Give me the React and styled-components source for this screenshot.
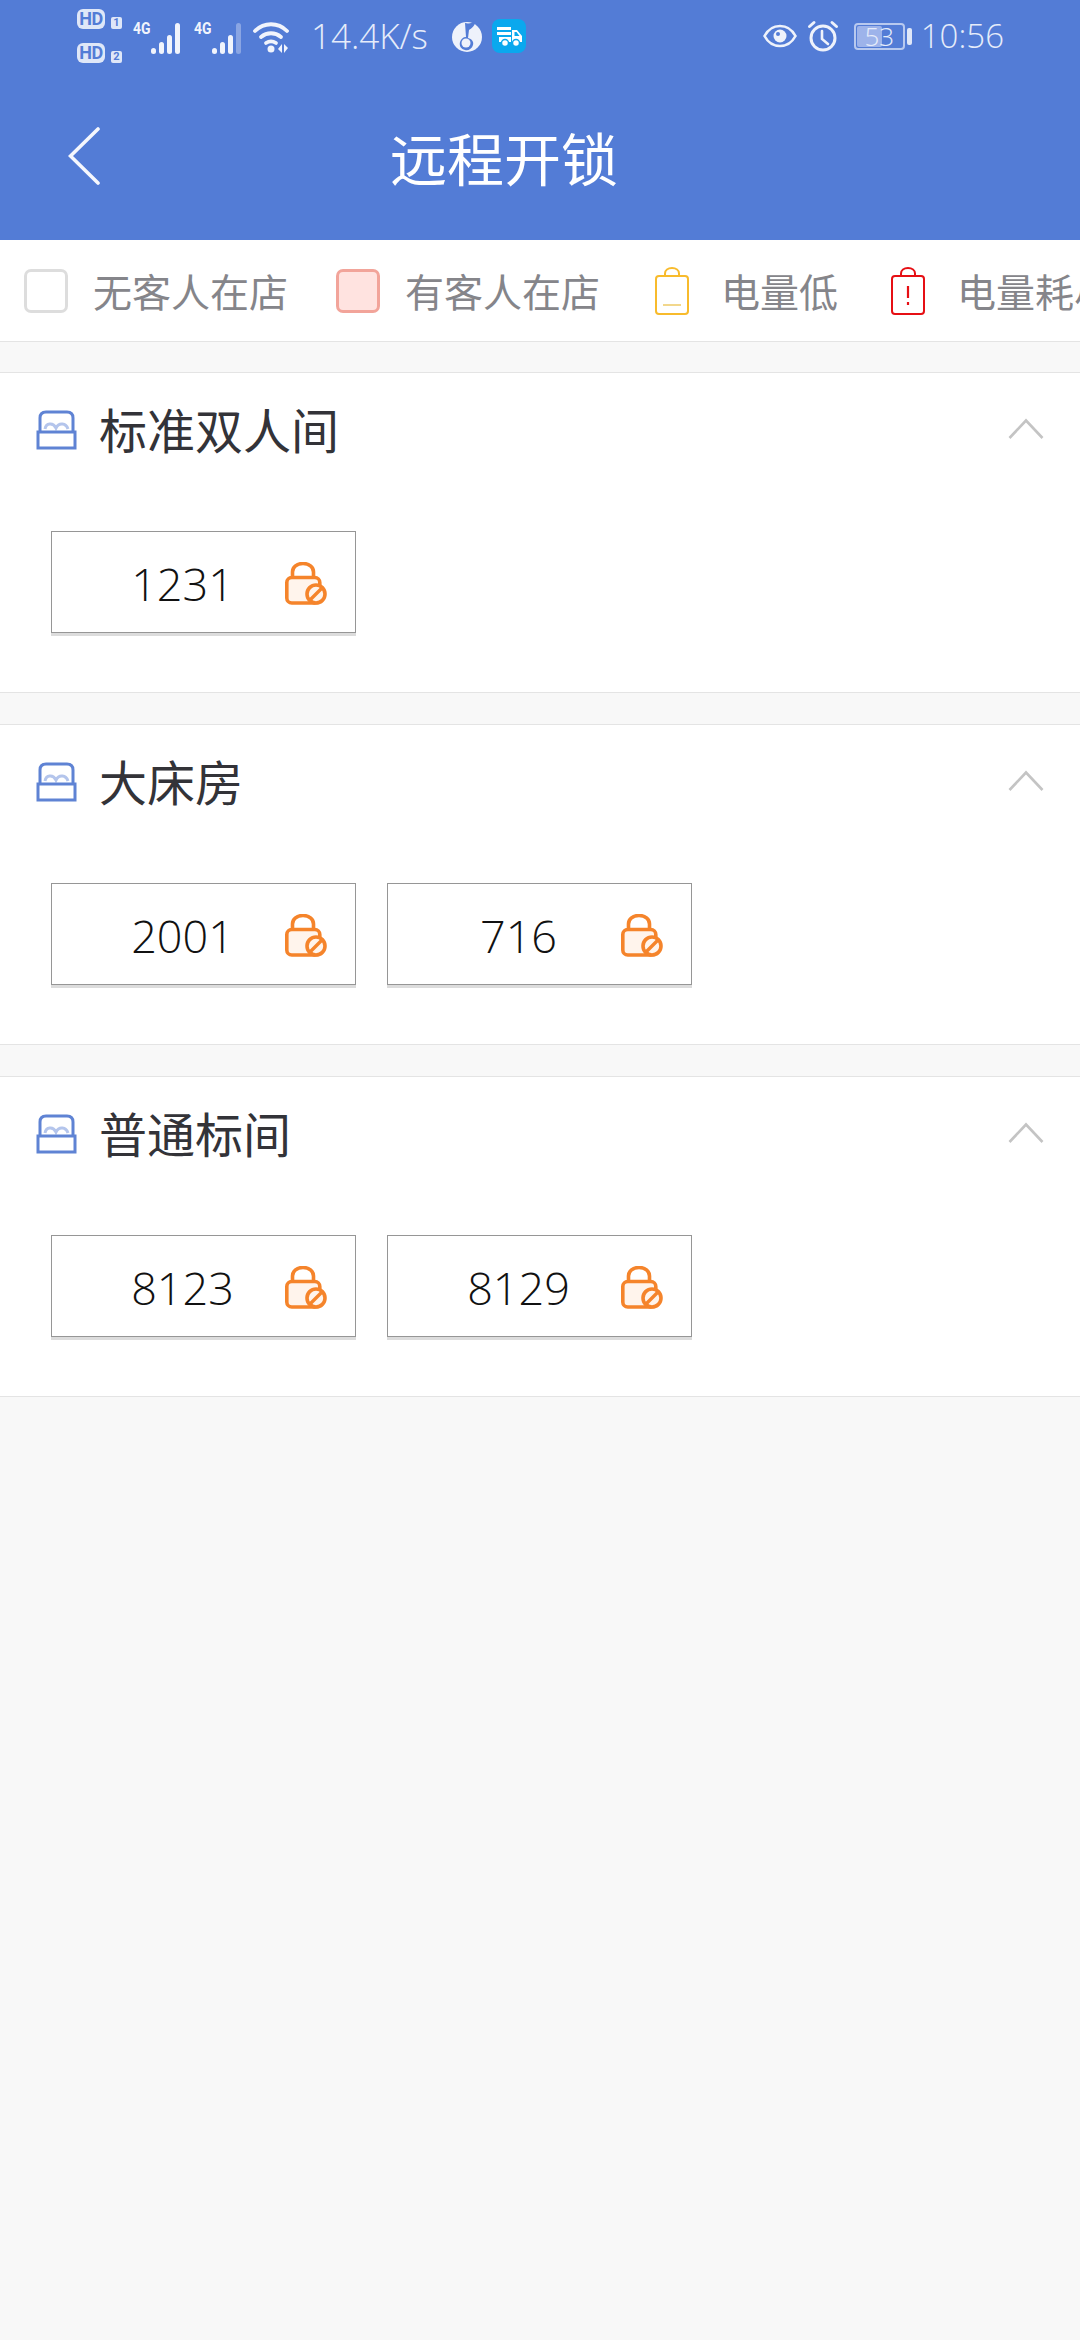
import styled, { createGlobalStyle } from "styled-components";

const GlobalStyle = createGlobalStyle`
  html, body {
    margin: 0;
    padding: 0;
    background: #f8f8f8;
  }
  body {
    font-family: "Open Sans", "Noto Sans CJK SC", sans-serif;
  }
`;

const Page = styled.div`
  width: 1080px;
  height: 2340px;
  overflow: hidden;
  background: #f8f8f8;
`;

const Header = styled.header`
  height: 240px;
  background: #537cd6;
  color: #fff;
`;

const StatusBar = styled.div`
  height: 72px;
  padding: 0 76px 0 77px;
  display: flex;
  align-items: center;
  justify-content: space-between;
`;

const StatusGroup = styled.div`
  display: flex;
  align-items: center;
`;

const HdStack = styled.div`
  display: flex;
  flex-direction: column;
  gap: 14px;
  margin-right: 11px;
`;

const HdRow = styled.div`
  display: flex;
  align-items: flex-end;
  gap: 6px;
`;

const HdChip = styled.span`
  width: 28px;
  height: 20px;
  border-radius: 6px;
  background: #dfe7f8;
  color: #537cd6;
  font: 700 18px/20px "Roboto", sans-serif;
  text-align: center;
  letter-spacing: -0.5px;
`;

const SimChip = styled.span`
  width: 11px;
  height: 12px;
  border-radius: 2px;
  background: #dfe7f8;
  color: #537cd6;
  font: 700 11px/12px "Roboto", sans-serif;
  text-align: center;
`;

const NetLabel = styled.span`
  width: 17px;
  margin: 0 0 ${(p) => p.$lift}px ${(p) => p.$left}px;
  font: 700 17px/16px "Roboto", sans-serif;
  color: #f1f4fc;
  transform: scaleX(0.82);
  transform-origin: left center;
`;

const Speed = styled.span`
  margin: 0 24px 0 22px;
  font-size: 35px;
  font-weight: 300;
  line-height: 40px;
  color: #e6ecfa;
  white-space: nowrap;
`;

const Clock = styled.span`
  margin-left: 9px;
  font-size: 33px;
  font-weight: 300;
  line-height: 40px;
  color: #e6ecfa;
`;

const BatteryBox = styled.div`
  position: relative;
  width: 51px;
  height: 27px;
  margin-left: 15px;
  box-sizing: border-box;
  border: 2px solid #b8c9ef;
  border-radius: 4px;
  display: flex;
  align-items: center;
  justify-content: center;
  font-size: 26px;
  font-weight: 300;
  color: #e6ecfa;
`;

const BatteryFill = styled.div`
  position: absolute;
  left: 1px;
  top: 1px;
  bottom: 1px;
  border-radius: 2px;
  background: #9db3ea;
`;

const BatteryValue = styled.span`
  position: relative;
  line-height: 23px;
`;

const BatteryNub = styled.div`
  width: 5px;
  height: 17px;
  margin-left: 2px;
  border-radius: 2px;
  background: #dfe7f8;
`;

const NavBar = styled.div`
  height: 168px;
  padding-left: 68px;
  display: flex;
  align-items: center;
`;

const BackButton = styled.button`
  width: 32px;
  height: 58px;
  padding: 0;
  border: 0;
  background: none;
  display: block;
`;

const Title = styled.h1`
  margin: 0 0 0 290px;
  font: 400 57px/70px "Noto Sans CJK SC", sans-serif;
  color: #fff;
  white-space: nowrap;
`;

const Legend = styled.div`
  height: 102px;
  box-sizing: border-box;
  padding-left: 24px;
  background: #fff;
  border-bottom: 1px solid #e4e4e4;
  display: flex;
  align-items: center;
  overflow: hidden;
`;

const LegendItem = styled.div`
  display: flex;
  align-items: center;
  flex: none;
  margin-right: ${(p) => p.$gap}px;
`;

const Swatch = styled.span`
  width: 44px;
  height: 44px;
  box-sizing: border-box;
  border-radius: 7px;
  border: 3px solid ${(p) => p.$line};
  background: ${(p) => p.$fill};
`;

const LegendText = styled.span`
  margin-left: ${(p) => p.$gap}px;
  margin-top: -2px;
  font: 400 39px/50px "Noto Sans CJK SC", sans-serif;
  color: #85858a;
  white-space: nowrap;
`;

const Section = styled.section`
  height: 321px;
  box-sizing: border-box;
  margin-top: ${(p) => p.$top}px;
  background: #fff;
  border-top: 1px solid #e4e4e4;
  border-bottom: 1px solid #e4e4e4;
`;

const SectionHead = styled.div`
  height: 158px;
  padding: 37px 36px 0 36px;
  box-sizing: border-box;
  display: flex;
  align-items: flex-start;
`;

const SectionTitle = styled.h2`
  flex: 1;
  margin: -17px 0 0 22px;
  font: 400 48px/70px "Noto Sans CJK SC", sans-serif;
  color: #333338;
`;

const Chevron = styled.svg`
  margin-top: 8px;
`;

const Rooms = styled.div`
  padding-left: 51px;
  display: flex;
  gap: 31px;
`;

const RoomCard = styled.div`
  width: 305px;
  height: 102px;
  box-sizing: border-box;
  padding: 0 28px 0 28px;
  background: #fff;
  border: 1px solid #969696;
  box-shadow: 0 3px 0 #dcdcdc;
  display: flex;
  align-items: center;
`;

const RoomNumber = styled.span`
  flex: 1;
  padding-top: 2px;
  text-align: center;
  font-size: 45px;
  font-weight: 300;
  color: #111;
`;

const Bars = ({ dim }) => (
  <svg width="32" height="32" viewBox="0 0 32 32" style={{ marginTop: 4 }}>
    <g fill="#f1f4fc">
      <rect x="1" y="26" width="5" height="6" rx="2.5" />
      <rect x="9" y="20" width="5" height="12" rx="2.5" />
      <rect x="17" y="13" width="5" height="19" rx="2.5" />
      <rect x="25" y="1" width="5" height="31" rx="2.5" opacity={dim ? 0.35 : 1} />
    </g>
  </svg>
);

const Wifi = () => (
  <svg width="36" height="32" viewBox="0 0 36 32" style={{ marginLeft: 10, marginTop: 2 }}>
    <g fill="none" stroke="#f1f4fc" strokeWidth="3.8" strokeLinecap="round">
      <path d="M2 10C11 1 25 1 34 10" />
      <path d="M8 16c6-5 14-5 20 0" />
      <path d="M13 22c3-2 7-2 10 0" />
    </g>
    <circle cx="18" cy="28" r="3.5" fill="#f1f4fc" />
    <path d="M29 23v9l-4-4zM31 23v9l4-5z" fill="#f1f4fc" />
  </svg>
);

const MusicBadge = () => (
  <svg width="30" height="32" viewBox="0 0 30 32">
    <circle cx="15" cy="17" r="15" fill="#eef2fb" />
    <path d="M13 3c4 1 8 0 11-3-1 6-4 8-7 10l-1 8c4 1 6 4 5 7-1 4-5 6-8 5-4-1-6-4-5-8 1-3 3-5 6-5z" fill="#537cd6" />
    <circle cx="14" cy="23" r="4.500" fill="#eef2fb" />
  </svg>
);

const TruckBadge = () => (
  <svg width="34" height="34" viewBox="0 0 34 34" style={{ marginLeft: 10 }}>
    <rect width="34" height="34" rx="8" fill="#0aa8ee" />
    <g fill="#fff">
      <path d="M5 8h14v3H5zM5 13h14v3H5zM7 18h12v5H7z" />
      <path d="M20 11h5l5 6v6H20zM22.500 13v4h5l-3-4z" fillRule="evenodd" />
    </g>
    <g fill="#fff" stroke="#0aa8ee" strokeWidth="1.500">
      <circle cx="13" cy="24" r="3.500" />
      <circle cx="24" cy="24" r="3.500" />
    </g>
  </svg>
);

const Eye = () => (
  <svg width="34" height="24" viewBox="0 0 34 24">
    <path d="M1.500 12C5 5.500 10.500 2 17 2s12 3.500 15.500 10C29 18.500 23.500 22 17 22S5 18.500 1.500 12z" fill="none" stroke="#eef2fb" strokeWidth="2.600" />
    <circle cx="17" cy="12" r="6.500" fill="#eef2fb" />
    <circle cx="15" cy="10" r="2" fill="#537cd6" />
  </svg>
);

const Alarm = () => (
  <svg width="32" height="32" viewBox="0 0 32 32" style={{ marginLeft: 10 }}>
    <circle cx="16" cy="18" r="12" fill="none" stroke="#eef2fb" strokeWidth="3" />
    <path d="M15 11v8l6 5" fill="none" stroke="#eef2fb" strokeWidth="2.600" strokeLinecap="round" />
    <path d="M2.500 6.500L7 2.500M29.500 6.500L25 2.500" stroke="#eef2fb" strokeWidth="3" strokeLinecap="round" />
  </svg>
);

const BackIcon = () => (
  <svg width="32" height="58" viewBox="0 0 32 58">
    <path d="M30 2L2.500 29 30 56" fill="none" stroke="#f5f7fd" strokeWidth="3.600" strokeLinecap="round" />
  </svg>
);

const BatteryIcon = ({ color, children }) => (
  <svg width="34" height="48" viewBox="0 0 34 48">
    <path d="M10 9V6.500C10 3 13 1 17 1s7 2 7 5.500V9" fill="none" stroke={color} strokeWidth="2" />
    <rect x="1" y="9" width="32" height="38" rx="3" fill="#fff" stroke={color} strokeWidth="2" />
    {children}
  </svg>
);

const BedIcon = () => (
  <svg width="41" height="40" viewBox="0 0 41 40">
    <path d="M4 22V8c0-4 2-6 6-6h21c4 0 6 2 6 6v14" fill="none" stroke="#5f83d4" strokeWidth="3" />
    <path d="M9 19c1-6 8-7 11-1 3-6 10-5 12 1" fill="none" stroke="#b4c5ec" strokeWidth="3" />
    <rect x="2" y="22" width="37" height="16" fill="#fff" stroke="#5f83d4" strokeWidth="3" />
  </svg>
);

const UpIcon = () => (
  <Chevron width="36" height="22" viewBox="0 0 36 22">
    <path d="M1.500 20L18 2.500 34.500 20" fill="none" stroke="#c4c4c4" strokeWidth="2.600" />
  </Chevron>
);

const LockIcon = () => (
  <svg width="42" height="43" viewBox="0 0 42 43" style={{ marginTop: 2 }}>
    <path d="M7.500 16V10C7.500 5 12 1.500 18 1.500S28.500 5 28.500 10v6" fill="none" stroke="#f5842b" strokeWidth="3.600" />
    <rect x="1.800" y="15.500" width="33" height="25.500" rx="5" fill="#fff4ec" stroke="#f5842b" strokeWidth="3.600" />
    <circle cx="31" cy="32" r="9" fill="#fff4ec" stroke="#f5842b" strokeWidth="3.600" />
    <path d="M25 38l12-12" stroke="#f5842b" strokeWidth="3.400" />
  </svg>
);

const sections = [
  { name: "标准双人间", rooms: ["1231"] },
  { name: "大床房", rooms: ["2001", "716"] },
  { name: "普通标间", rooms: ["8123", "8129"] },
];

export default function App() {
  return (
    <Page>
      <GlobalStyle />
      <Header>
        <StatusBar>
          <StatusGroup>
            <HdStack>
              <HdRow>
                <HdChip>HD</HdChip>
                <SimChip>1</SimChip>
              </HdRow>
              <HdRow>
                <HdChip>HD</HdChip>
                <SimChip>2</SimChip>
              </HdRow>
            </HdStack>
            <NetLabel $lift={16} $left={0}>4G</NetLabel>
            <Bars />
            <NetLabel $lift={16} $left={12}>4G</NetLabel>
            <Bars dim />
            <Wifi />
            <Speed>14.4K/s</Speed>
            <MusicBadge />
            <TruckBadge />
          </StatusGroup>
          <StatusGroup>
            <Eye />
            <Alarm />
            <BatteryBox>
              <BatteryFill style={{ width: "53%" }} />
              <BatteryValue>53</BatteryValue>
            </BatteryBox>
            <BatteryNub />
            <Clock>10:56</Clock>
          </StatusGroup>
        </StatusBar>
        <NavBar>
          <BackButton>
            <BackIcon />
          </BackButton>
          <Title>远程开锁</Title>
        </NavBar>
      </Header>

      <Legend>
        <LegendItem $gap={48}>
          <Swatch $line="#dddddd" $fill="#fff" />
          <LegendText $gap={25}>无客人在店</LegendText>
        </LegendItem>
        <LegendItem $gap={55}>
          <Swatch $line="#f2a49a" $fill="#ffe3e0" />
          <LegendText $gap={25}>有客人在店</LegendText>
        </LegendItem>
        <LegendItem $gap={53}>
          <BatteryIcon color="#f8bb2c">
            <path d="M8 38h18" stroke="#f2d78c" strokeWidth="2" />
          </BatteryIcon>
          <LegendText $gap={32}>电量低</LegendText>
        </LegendItem>
        <LegendItem $gap={0}>
          <BatteryIcon color="#e60f14">
            <path d="M17 19v12M17 35v3" stroke="#e60f14" strokeWidth="2.200" />
          </BatteryIcon>
          <LegendText $gap={32}>电量耗尽</LegendText>
        </LegendItem>
      </Legend>

      {sections.map((section, i) => (
        <Section key={section.name} $top={i === 0 ? 30 : 31}>
          <SectionHead>
            <BedIcon />
            <SectionTitle>{section.name}</SectionTitle>
            <UpIcon />
          </SectionHead>
          <Rooms>
            {section.rooms.map((room) => (
              <RoomCard key={room}>
                <RoomNumber>{room}</RoomNumber>
                <LockIcon />
              </RoomCard>
            ))}
          </Rooms>
        </Section>
      ))}
    </Page>
  );
}
